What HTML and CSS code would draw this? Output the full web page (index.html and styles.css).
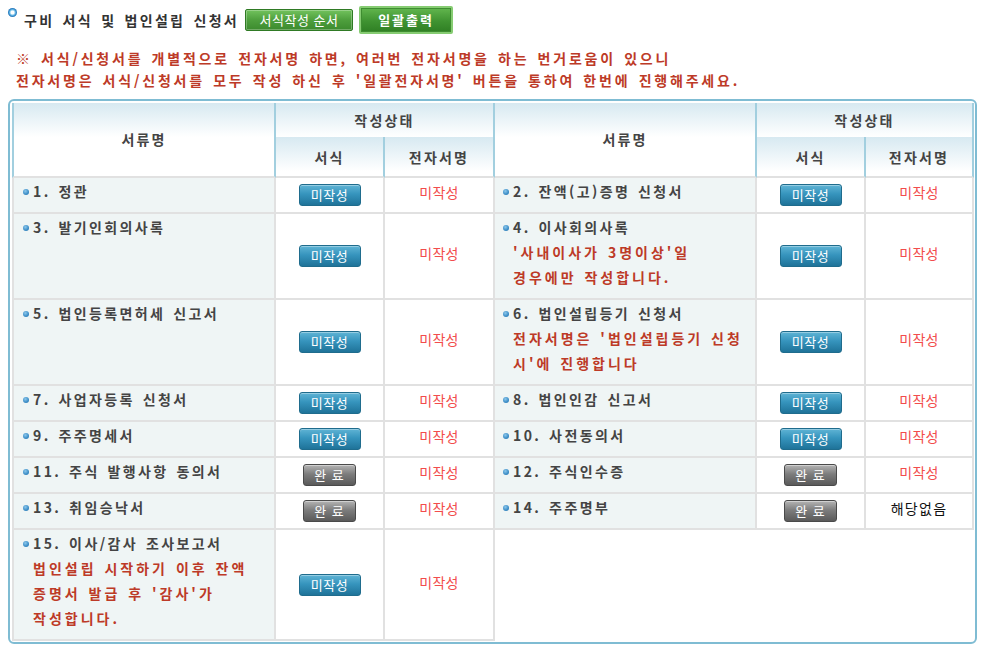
FILE: index.html
```html
<!DOCTYPE html>
<html lang="ko">
<head>
<meta charset="utf-8">
<title>구비 서식 및 법인설립 신청서</title>
<link rel="stylesheet" href="styles.css">
</head>
<body>
<div class="page">
  <div class="titlebar">
    <span class="ticon"></span>
    <h2 class="title">구비 서식 및 법인설립 신청서</h2>
    <button class="gbtn">서식작성 순서</button>
    <button class="gbtn big">일괄출력</button>
  </div>
  <div class="notice">
    <p>※ 서식/신청서를 개별적으로 전자서명 하면, 여러번 전자서명을 하는 번거로움이 있으니</p>
    <p>전자서명은 서식/신청서를 모두 작성 하신 후 '일괄전자서명' 버튼을 통하여 한번에 진행해주세요.</p>
  </div>
  <div class="box">
    <table class="docs">
      <colgroup>
        <col class="c-name1"><col class="c-form"><col class="c-sign1">
        <col class="c-name2"><col class="c-form"><col class="c-sign2">
      </colgroup>
      <thead>
        <tr class="h1">
          <th rowspan="2" class="first tall">서류명</th>
          <th colspan="2">작성상태</th>
          <th rowspan="2" class="tall">서류명</th>
          <th colspan="2">작성상태</th>
        </tr>
        <tr class="h2">
          <th>서식</th><th>전자서명</th>
          <th>서식</th><th>전자서명</th>
        </tr>
      </thead>
      <tbody>
        <tr>
          <td class="name first"><span class="dot"></span>1. 정관</td>
          <td><span class="bb">미작성</span></td>
          <td><span class="st">미작성</span></td>
          <td class="name"><span class="dot"></span>2. 잔액(고)증명 신청서</td>
          <td><span class="bb">미작성</span></td>
          <td><span class="st">미작성</span></td>
        </tr>
        <tr>
          <td class="name first"><span class="dot"></span>3. 발기인회의사록</td>
          <td><span class="bb">미작성</span></td>
          <td><span class="st">미작성</span></td>
          <td class="name"><span class="dot"></span>4. 이사회의사록<span class="note">'사내이사가 3명이상'일<br>경우에만 작성합니다.</span></td>
          <td><span class="bb">미작성</span></td>
          <td><span class="st">미작성</span></td>
        </tr>
        <tr>
          <td class="name first"><span class="dot"></span>5. 법인등록면허세 신고서</td>
          <td><span class="bb">미작성</span></td>
          <td><span class="st">미작성</span></td>
          <td class="name"><span class="dot"></span>6. 법인설립등기 신청서<span class="note">전자서명은 '법인설립등기 신청<br>시'에 진행합니다</span></td>
          <td><span class="bb">미작성</span></td>
          <td><span class="st">미작성</span></td>
        </tr>
        <tr>
          <td class="name first"><span class="dot"></span>7. 사업자등록 신청서</td>
          <td><span class="bb">미작성</span></td>
          <td><span class="st">미작성</span></td>
          <td class="name"><span class="dot"></span>8. 법인인감 신고서</td>
          <td><span class="bb">미작성</span></td>
          <td><span class="st">미작성</span></td>
        </tr>
        <tr>
          <td class="name first"><span class="dot"></span>9. 주주명세서</td>
          <td><span class="bb">미작성</span></td>
          <td><span class="st">미작성</span></td>
          <td class="name"><span class="dot"></span>10. 사전동의서</td>
          <td><span class="bb">미작성</span></td>
          <td><span class="st">미작성</span></td>
        </tr>
        <tr>
          <td class="name first"><span class="dot"></span>11. 주식 발행사항 동의서</td>
          <td><span class="gb">완 료</span></td>
          <td><span class="st">미작성</span></td>
          <td class="name"><span class="dot"></span>12. 주식인수증</td>
          <td><span class="gb">완 료</span></td>
          <td><span class="st">미작성</span></td>
        </tr>
        <tr>
          <td class="name first"><span class="dot"></span>13. 취임승낙서</td>
          <td><span class="gb">완 료</span></td>
          <td><span class="st">미작성</span></td>
          <td class="name"><span class="dot"></span>14. 주주명부</td>
          <td><span class="gb">완 료</span></td>
          <td><span class="na">해당없음</span></td>
        </tr>
        <tr>
          <td class="name first"><span class="dot"></span>15. 이사/감사 조사보고서<span class="note">법인설립 시작하기 이후 잔액<br>증명서 발급 후 '감사'가<br>작성합니다.</span></td>
          <td><span class="bb">미작성</span></td>
          <td><span class="st">미작성</span></td>
          <td colspan="3" class="empty"></td>
        </tr>
      </tbody>
    </table>
  </div>
</div>
</body>
</html>
```

FILE: styles.css
```css
* { box-sizing: border-box; }

body {
  margin: 0;
  background: #fff;
  font-family: "Noto Sans CJK KR", "Noto Sans", sans-serif;
  font-size: 13px;
  color: #444;
}

.page { padding: 6px 0 0 8px; }

/* title bar */
.titlebar {
  display: flex;
  align-items: center;
  height: 28px;
}
.ticon {
  width: 9px;
  height: 9px;
  border-radius: 50%;
  align-self: flex-start;
  margin-top: 2px;
  background: radial-gradient(circle, #ffffff 0 1.5px, #a9dbf3 2.2px, #3f9ad6 3.4px, #1d6fb3 4.5px);
}
.title {
  margin: 0 0 0 7px;
  font-size: 14px;
  font-weight: 700;
  color: #333;
  letter-spacing: 2.3px;
  word-spacing: 2px;
  line-height: 28px;
}
.gbtn {
  margin-left: 6px;
  width: 108px;
  height: 22px;
  padding: 0;
  border: 1px solid #2f7a24;
  border-radius: 2px;
  background: linear-gradient(#72c25d, #4e9f3d 50%, #3c8b2e);
  box-shadow: inset 0 0 0 1px rgba(255, 255, 255, .28);
  color: #fff;
  font-family: inherit;
  font-size: 13px;
  letter-spacing: .5px;
  line-height: 20px;
}
.gbtn.big {
  margin-left: 6px;
  width: 94px;
  height: 28px;
  border: 2px solid #86cc72;
  outline: 1px solid #3f8d31;
  outline-offset: -3px;
  background: linear-gradient(#62b64e, #3f9331 55%, #2f7f24);
  box-shadow: none;
  font-weight: 700;
  letter-spacing: 2px;
}

/* notice */
.notice {
  margin-top: 13px;
  padding-left: 8px;
  color: #bd3a27;
  font-weight: 700;
  font-size: 14px;
  letter-spacing: 2.8px;
  word-spacing: 1.5px;
  line-height: 22px;
}
.notice p { margin: 0; white-space: nowrap; }

/* table box */
.box {
  margin-top: 8px;
  width: 969px;
  border: 2px solid #7fbcd3;
  border-radius: 6px;
  padding: 2px 1px 1px 2px;
}

.docs {
  width: 962px;
  table-layout: fixed;
  border-collapse: separate;
  border-spacing: 0;
}
.c-name1 { width: 264px; }
.c-form { width: 109px; }
.c-sign1 { width: 110px; }
.c-name2 { width: 262px; }
.c-sign2 { width: 108px; }

.docs th {
  padding: 0;
  font-weight: 700;
  font-size: 14px;
  color: #444;
  letter-spacing: 2.2px;
  text-align: center;
  vertical-align: middle;
  background: linear-gradient(#d7e9f1 0, #ffffff 34px);
  border-right: 2px solid #a2cfdf;
}
.docs th.first { border-left: 2px solid #a2cfdf; }
.docs tr.h1 th { height: 34px; }
.docs tr.h2 th { height: 41px; border-bottom: 2px solid #e1e1e1; }
.docs th.tall { border-bottom: 2px solid #e1e1e1; padding-bottom: 2px; }

.docs td {
  padding: 0;
  text-align: center;
  vertical-align: middle;
  border-right: 2px solid #e1e1e1;
  border-bottom: 2px solid #e1e1e1;
  background: #fff;
}
.docs td.name {
  text-align: left;
  vertical-align: top;
  background: #eff5f5;
  padding: 1px 4px 8px 8px;
  line-height: 25px;
  font-size: 14px;
  font-weight: 700;
  color: #444;
  letter-spacing: 2.4px;
  word-spacing: 1.5px;
  white-space: nowrap;
}
.docs td.name.first {
  border-left: 2px solid #e1e1e1;
  padding-left: 9px;
}
.docs td.empty {
  border-right: 0;
  border-bottom: 0;
}

.dot {
  display: inline-block;
  width: 6px;
  height: 6px;
  margin-right: 4px;
  border-radius: 50%;
  vertical-align: 2px;
  background: radial-gradient(circle at 40% 35%, #8cc8ec, #3b8cc6 60%, #2a74ad);
}
.note {
  display: block;
  padding-left: 10px;
  color: #bd3a27;
  letter-spacing: 3px;
  word-spacing: 1px;
  white-space: nowrap;
}

.bb, .gb {
  display: block;
  margin: 0 auto;
  height: 22px;
  line-height: 20px;
  border-radius: 3px;
  color: #fff;
  font-size: 13px;
  text-align: center;
}
.bb {
  width: 62px;
  border: 1px solid #1f6c8d;
  background: linear-gradient(#5fb4d5, #3694bd 45%, #1f7399);
  box-shadow: inset 0 1px 0 rgba(255, 255, 255, .35);
  letter-spacing: .5px;
}
.gb {
  width: 53px;
  border: 1px solid #4a4a4a;
  background: linear-gradient(#b4b4b4, #7d7d7d 45%, #5a5a5a);
  box-shadow: inset 0 1px 0 rgba(255, 255, 255, .4);
  letter-spacing: 1px;
}
.st, .na {
  display: inline-block;
  margin-bottom: 6px;
  font-size: 14px;
}
.st {
  color: #f24c4c;
  letter-spacing: .3px;
}
.na {
  color: #111;
  letter-spacing: 1.3px;
}
```
